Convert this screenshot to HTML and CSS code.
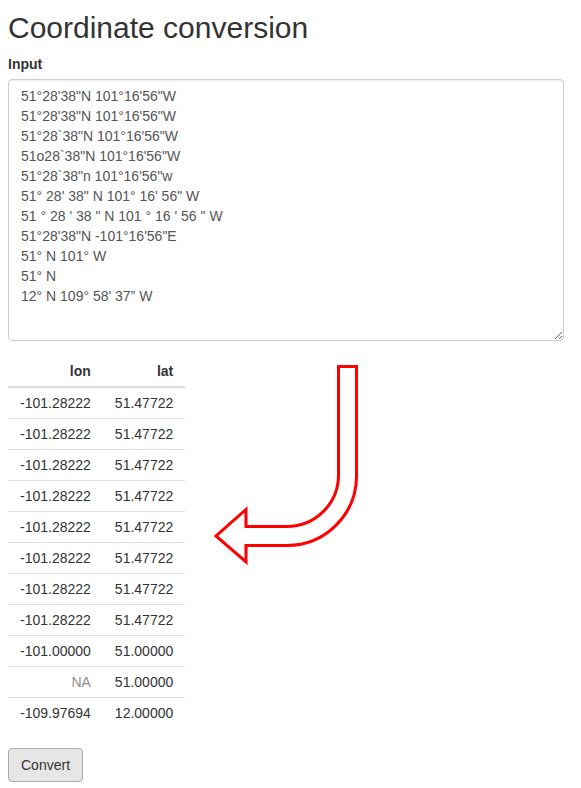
FILE: index.html
```html
<!DOCTYPE html>
<html>
<head>
<meta charset="utf-8">
<title>Coordinate conversion</title>
<link rel="stylesheet" href="styles.css">
</head>
<body>
<div class="page">
  <h2 class="title">Coordinate conversion</h2>
  <div class="form-group">
    <label class="label" for="input">Input</label>
    <textarea id="input" class="input-area">51°28'38"N 101°16'56"W
51°28'38"N 101°16'56"W
51°28`38"N 101°16'56"W
51o28`38"N 101°16'56"W
51°28`38"n 101°16'56"w
51° 28' 38" N 101° 16' 56" W
51 ° 28 ' 38 " N 101 ° 16 ' 56 " W
51°28'38"N -101°16'56"E
51° N 101° W
51° N
12° N 109° 58' 37” W</textarea>
  </div>
  <table class="result">
    <thead>
      <tr><th>lon</th><th>lat</th></tr>
    </thead>
    <tbody>
      <tr><td>-101.28222</td><td>51.47722</td></tr>
      <tr><td>-101.28222</td><td>51.47722</td></tr>
      <tr><td>-101.28222</td><td>51.47722</td></tr>
      <tr><td>-101.28222</td><td>51.47722</td></tr>
      <tr><td>-101.28222</td><td>51.47722</td></tr>
      <tr><td>-101.28222</td><td>51.47722</td></tr>
      <tr><td>-101.28222</td><td>51.47722</td></tr>
      <tr><td>-101.28222</td><td>51.47722</td></tr>
      <tr><td>-101.00000</td><td>51.00000</td></tr>
      <tr><td class="na">NA</td><td>51.00000</td></tr>
      <tr><td>-109.97694</td><td>12.00000</td></tr>
    </tbody>
  </table>
  <button class="btn" type="button">Convert</button>
</div>
<svg class="arrow" width="581" height="788" viewBox="0 0 581 788" aria-hidden="true">
  <path d="M338.5,366.5 H356.5 V476 A69.5,69.5 0 0 1 287,545.5 H246 V562 L216,536 L246,509.5 V526.5 H287 A51.5,51.5 0 0 0 338.5,475 Z" fill="none" stroke="#ff0000" stroke-width="3" stroke-linejoin="miter"/>
</svg>
</body>
</html>
```
FILE: styles.css
```css
html, body {
  margin: 0;
  padding: 0;
  background: #fff;
}
body {
  font-family: "Liberation Sans", Arial, sans-serif;
  font-size: 14px;
  line-height: 20px;
  color: #333;
  position: relative;
  width: 581px;
  height: 788px;
  overflow: hidden;
}
.page {
  padding: 0 17px 0 8px;
  display: flex;
  flex-direction: column;
  align-items: flex-start;
}
.title {
  font-size: 30px;
  font-weight: 500;
  line-height: 33px;
  margin: 11px 0 10px 0;
  color: #333;
}
.form-group {
  display: flex;
  flex-direction: column;
  align-self: stretch;
  margin-bottom: 15px;
}
.label {
  font-weight: bold;
  margin-bottom: 5px;
}
.input-area {
  box-sizing: border-box;
  width: 556px;
  height: 262px;
  padding: 6px 12px;
  border: 1px solid #ccc;
  border-radius: 4px;
  font-family: "Liberation Sans", Arial, sans-serif;
  font-size: 14px;
  line-height: 20px;
  color: #555;
  box-shadow: inset 0 1px 1px rgba(0,0,0,.075);
  resize: both;
  margin: 0;
}
.result {
  border-collapse: collapse;
  margin-bottom: 20px;
}
.result th, .result td {
  text-align: right;
  padding: 5px 12px;
  line-height: 20px;
}
.result th {
  font-weight: bold;
  border-bottom: 2px solid #ddd;
}
.result td {
  border-top: 1px solid #ddd;
}
.result tbody tr:first-child td {
  border-top: 0;
}
.result td.na {
  color: #909090;
}
.btn {
  font-family: "Liberation Sans", Arial, sans-serif;
  font-size: 14px;
  line-height: 20px;
  color: #333;
  background: #e6e6e6;
  border: 1px solid #adadad;
  border-radius: 4px;
  padding: 6px 12px;
  margin: 0;
}
.arrow {
  position: absolute;
  left: 0;
  top: 0;
  pointer-events: none;
}
```
